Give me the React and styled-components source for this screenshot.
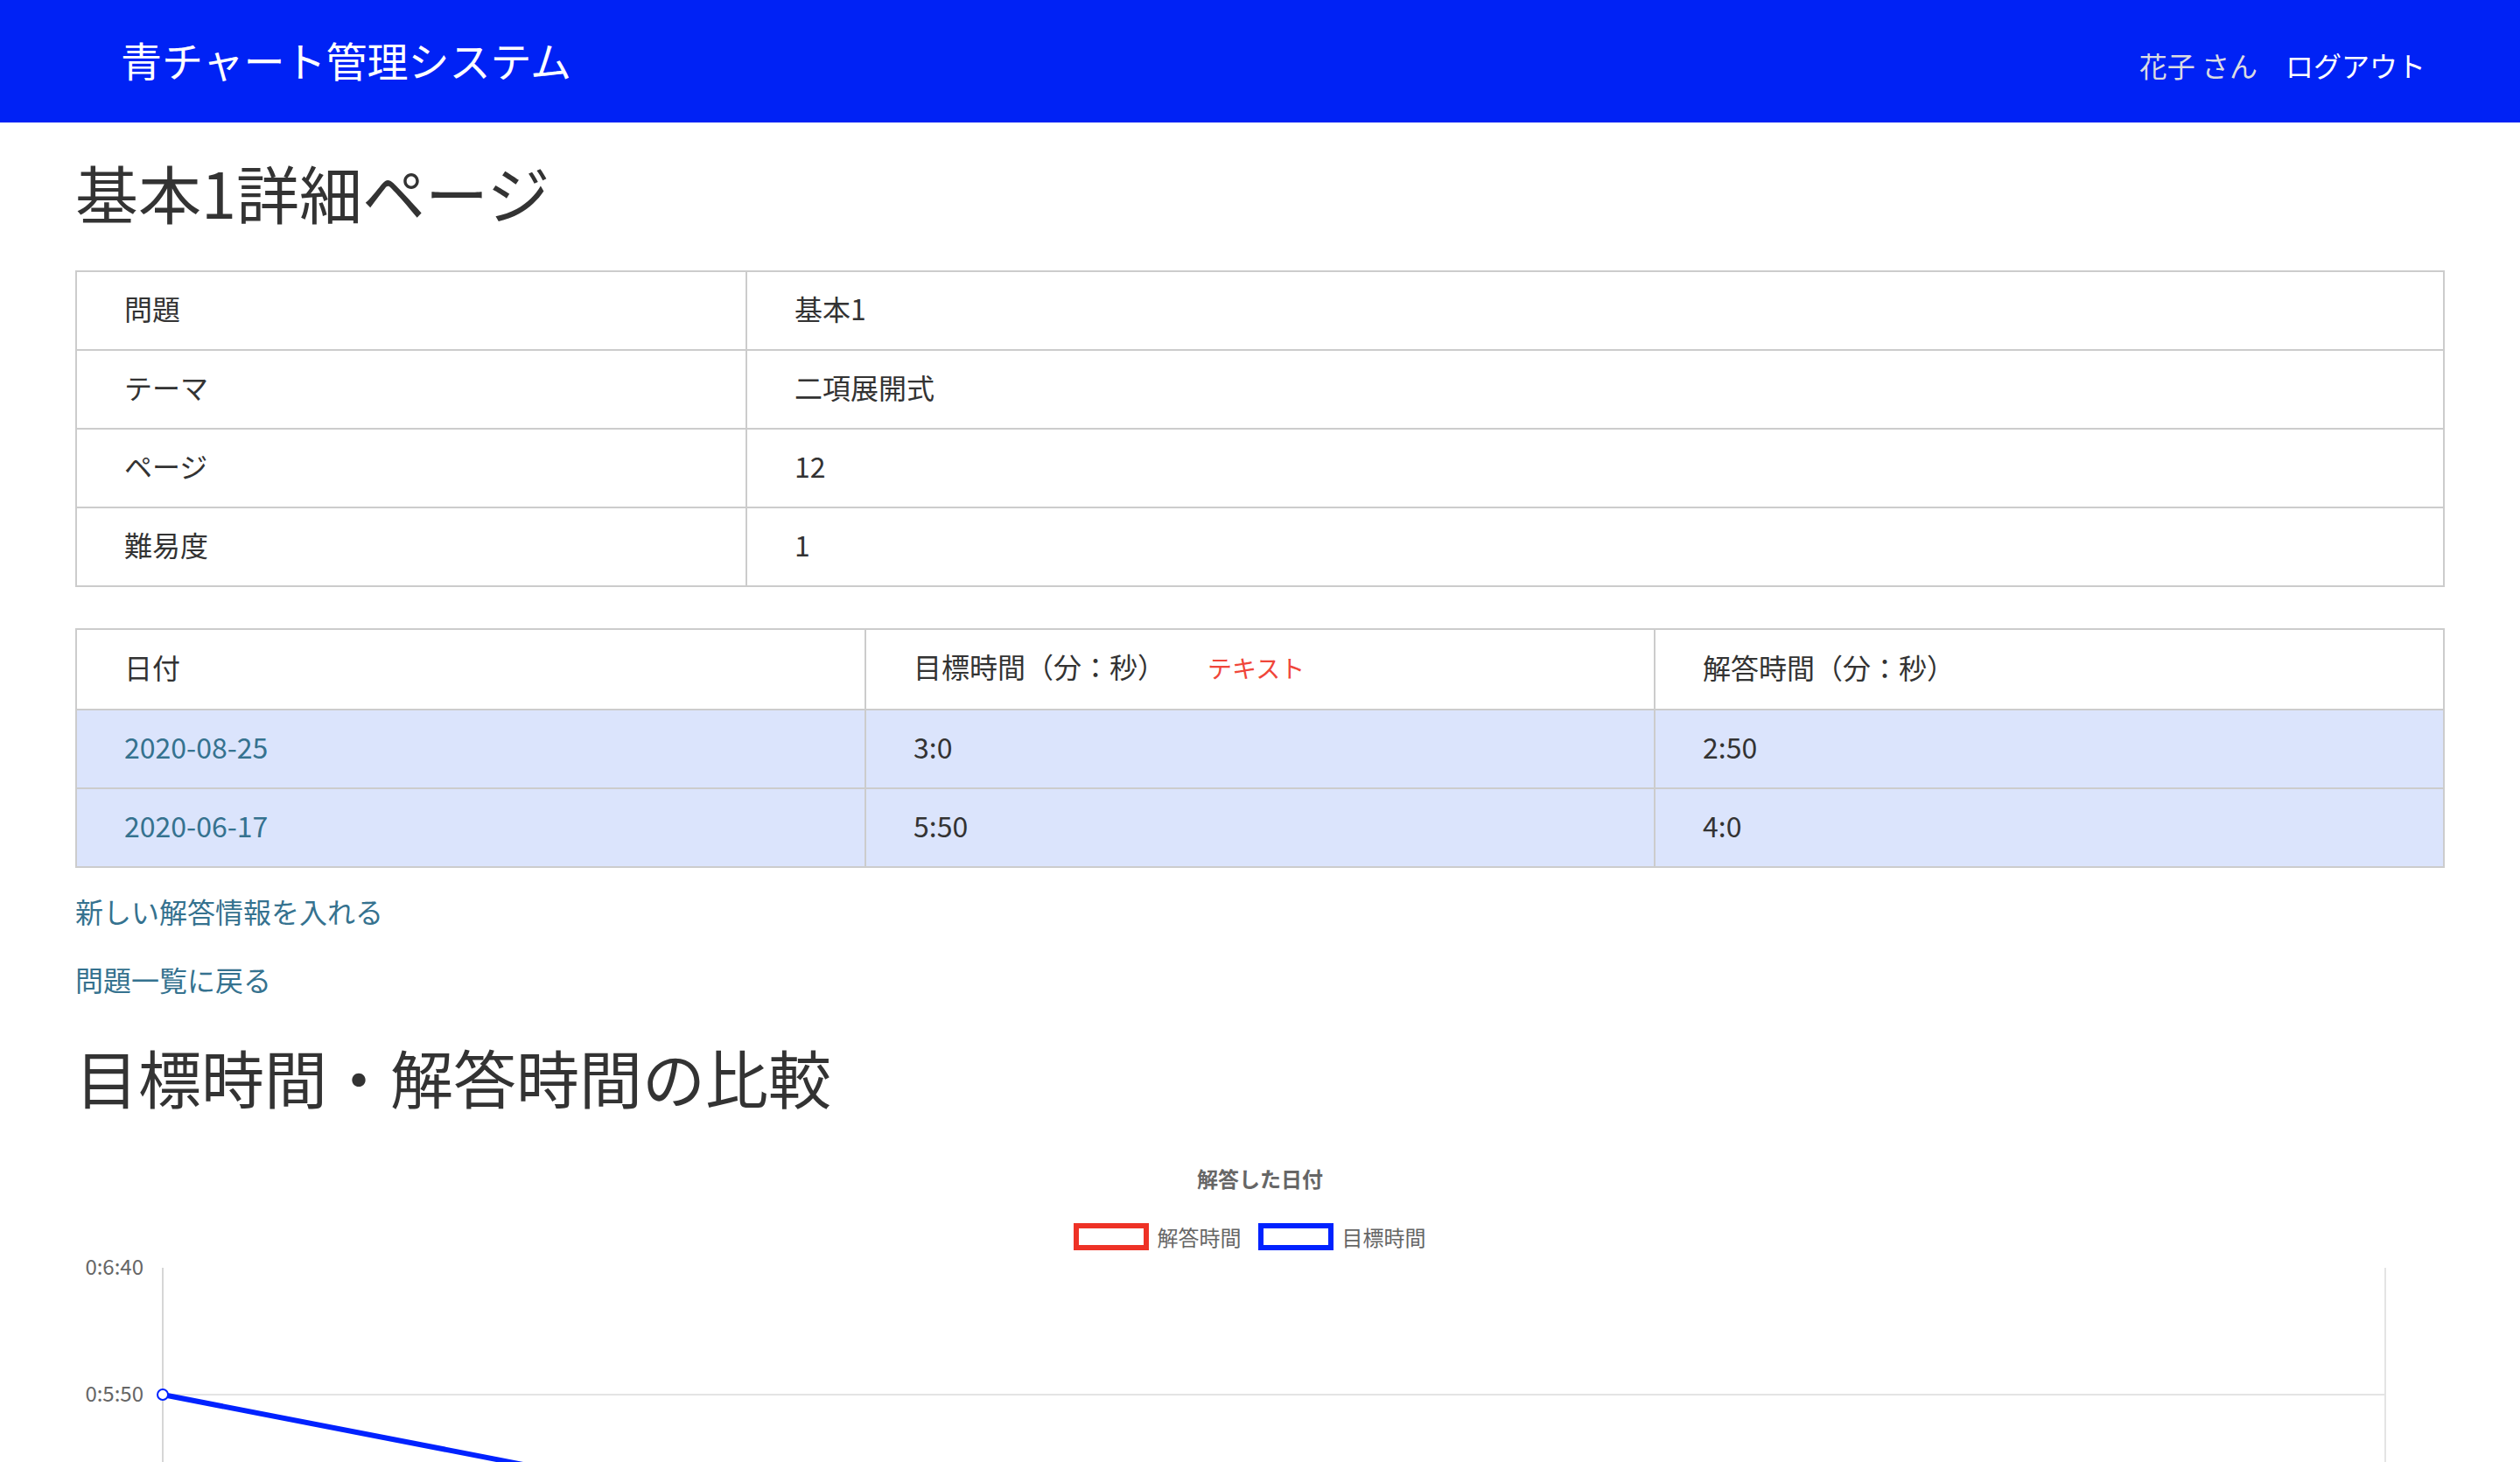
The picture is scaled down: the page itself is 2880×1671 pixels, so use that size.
import React from 'react';
import styled, { createGlobalStyle } from 'styled-components';

const GlobalStyle = createGlobalStyle`
  * { box-sizing: border-box; }
  body {
    margin: 0;
    background: #fff;
    color: #333;
    font-family: "Noto Sans CJK JP", "Noto Sans", sans-serif;
  }
`;

const Header = styled.header`
  height: 140px;
  background: #0022f5;
  display: flex;
  align-items: center;
  justify-content: space-between;
  padding: 0 108px 0 138px;
`;

const Brand = styled.div`
  color: #fff;
  font-size: 47px;
  line-height: 1;
  margin-top: -6px;
`;

const Nav = styled.nav`
  display: flex;
  gap: 32px;
  font-size: 32px;
  line-height: 1;
  margin-top: 8px;
`;

const NavItem = styled.span`
  color: ${p => (p.$muted ? '#dadbe2' : '#fff')};
`;

const Main = styled.main`
  padding: 0 86px;
`;

const PageTitle = styled.h1`
  font-size: 72px;
  font-weight: 400;
  line-height: 86px;
  margin: ${p => p.$margin};
`;

const Table = styled.table`
  width: 100%;
  border-collapse: collapse;
  table-layout: fixed;
  font-size: 32px;
  margin-bottom: ${p => p.$gap}px;
`;

const Cell = styled.td`
  border: 2px solid #ccc;
  padding: 17px 54px 23px;
  line-height: 48px;
  text-align: left;
  font-weight: 400;
  background: ${p => (p.$tint ? '#dbe4fc' : 'transparent')};
`;

const Note = styled.span`
  color: #f0463a;
  font-size: 28px;
  margin-left: 48px;
`;

const TextLink = styled.a`
  color: #35728f;
  text-decoration: none;
  font-size: 32px;
  line-height: 48px;
`;

const LinkList = styled.div`
  display: flex;
  flex-direction: column;
  align-items: flex-start;
  gap: 30px;
  margin-top: 25px;
`;

const ChartBox = styled.section`
  display: flex;
  flex-direction: column;
  align-items: center;
  margin-top: 61px;
`;

const ChartTitle = styled.div`
  font-size: 24px;
  font-weight: 700;
  line-height: 30px;
  color: #666;
  margin-top: -2px;
`;

const Legend = styled.div`
  display: flex;
  align-items: center;
  gap: 19px;
  margin: 36px 24px 0 0;
  height: 31px;
`;

const LegendItem = styled.div`
  display: flex;
  align-items: center;
  gap: 10px;
  font-size: 24px;
  color: #666;
`;

const Swatch = styled.span`
  width: 86px;
  height: 31px;
  border: 6px solid ${p => p.$color};
  background: #fff;
`;

const Plot = styled.svg`
  display: block;
  width: 100%;
  height: 700px;
  margin-top: 3px;
`;

const info = [
  ['問題', '基本1'],
  ['テーマ', '二項展開式'],
  ['ページ', '12'],
  ['難易度', '1'],
];

const answers = [
  { date: '2020-08-25', target: '3:0', answer: '2:50' },
  { date: '2020-06-17', target: '5:50', answer: '4:0' },
];

// chart scale: 0:6:40 at y=17, 2.9px per second
const toY = sec => 17 + (400 - sec) * 2.9;
const X0 = 100;
const X1 = 2640;

function Chart() {
  const grid = [350, 300, 250, 200, 150];
  return (
    <ChartBox>
      <ChartTitle>解答した日付</ChartTitle>
      <Legend>
        <LegendItem><Swatch $color="#ee3226" />解答時間</LegendItem>
        <LegendItem><Swatch $color="#0022ff" />目標時間</LegendItem>
      </Legend>
      <Plot viewBox="0 0 2708 700" preserveAspectRatio="xMinYMin meet">
        {grid.map(s => (
          <line key={s} x1={X0} x2={X1} y1={toY(s)} y2={toY(s)} stroke="#e4e4e4" strokeWidth="2" />
        ))}
        <line x1={X0} x2={X0} y1={17} y2={700} stroke="#d6d6d6" strokeWidth="2" />
        <line x1={X1} x2={X1} y1={17} y2={700} stroke="#e4e4e4" strokeWidth="2" />
        <g fill="#666" fontSize="24" textAnchor="end" fontFamily="Noto Sans CJK JP, sans-serif">
          <text x="78" y={toY(400) + 8}>0:6:40</text>
          {grid.map(s => (
            <text key={s} x="78" y={toY(s) + 8}>{`0:${Math.floor(s / 60)}:${s % 60 === 0 ? '00' : s % 60}`}</text>
          ))}
        </g>
        <polyline points={`${X0},${toY(240)} ${X1},${toY(170)}`} fill="none" stroke="#ee3226" strokeWidth="6" />
        <polyline points={`${X0},${toY(350)} ${X1},${toY(180)}`} fill="none" stroke="#0022ff" strokeWidth="6" />
        <circle cx={X0} cy={toY(350)} r="6" fill="#fff" stroke="#0022ff" strokeWidth="2" />
      </Plot>
    </ChartBox>
  );
}

export default function App() {
  return (
    <>
      <GlobalStyle />
      <Header>
        <Brand>青チャート管理システム</Brand>
        <Nav>
          <NavItem $muted>花子 さん</NavItem>
          <NavItem>ログアウト</NavItem>
        </Nav>
      </Header>
      <Main>
        <PageTitle $margin="36px 0 47px">基本1詳細ページ</PageTitle>
        <Table $gap={47}>
          <colgroup>
            <col style={{ width: '766px' }} />
            <col />
          </colgroup>
          <tbody>
            {info.map(([k, v]) => (
              <tr key={k}>
                <Cell>{k}</Cell>
                <Cell>{v}</Cell>
              </tr>
            ))}
          </tbody>
        </Table>
        <Table $gap={0}>
          <thead>
            <tr>
              <Cell as="th">日付</Cell>
              <Cell as="th">目標時間（分：秒）<Note>テキスト</Note></Cell>
              <Cell as="th">解答時間（分：秒）</Cell>
            </tr>
          </thead>
          <tbody>
            {answers.map(r => (
              <tr key={r.date}>
                <Cell $tint><TextLink href="#">{r.date}</TextLink></Cell>
                <Cell $tint>{r.target}</Cell>
                <Cell $tint>{r.answer}</Cell>
              </tr>
            ))}
          </tbody>
        </Table>
        <LinkList>
          <TextLink href="#">新しい解答情報を入れる</TextLink>
          <TextLink href="#">問題一覧に戻る</TextLink>
        </LinkList>
        <PageTitle $margin="44px 0 0">目標時間・解答時間の比較</PageTitle>
        <Chart />
      </Main>
    </>
  );
}
